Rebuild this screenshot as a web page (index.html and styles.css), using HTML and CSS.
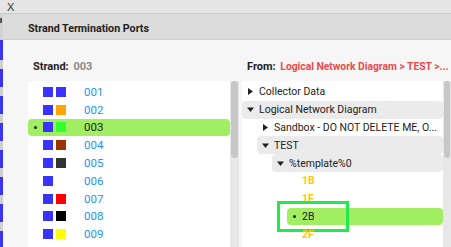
FILE: index.html
```html
<!DOCTYPE html>
<html lang="en">
<head>
  <meta charset="UTF-8">
  <title>Strand Termination Ports</title>
  <link rel="stylesheet" href="styles.css">
</head>
<body>
  <div class="topbar"><span class="close">X</span></div>
  <div class="main">
    <div class="behind">
      <div class="behind-head"><span class="glyph"></span></div>
      <div class="behind-body"></div>
    </div>
    <div class="modal">
      <div class="modal-head">Strand Termination Ports</div>
      <div class="modal-body">

        <!-- Strand list -->
        <div class="col col-strand">
          <div class="label"><b>Strand:</b> <span class="value">003</span></div>
          <div class="panel">
            <ul class="list">
              <li class="row"><span class="dot"></span><span class="sq blue"></span><span class="sq blue"></span><span class="num">001</span></li>
              <li class="row"><span class="dot"></span><span class="sq blue"></span><span class="sq orange"></span><span class="num">002</span></li>
              <li class="row selected"><span class="dot on"></span><span class="sq blue"></span><span class="sq green"></span><span class="num">003</span></li>
              <li class="row"><span class="dot"></span><span class="sq blue"></span><span class="sq brown"></span><span class="num">004</span></li>
              <li class="row"><span class="dot"></span><span class="sq blue"></span><span class="sq slate"></span><span class="num">005</span></li>
              <li class="row"><span class="dot"></span><span class="sq blue"></span><span class="sq none"></span><span class="num">006</span></li>
              <li class="row"><span class="dot"></span><span class="sq blue"></span><span class="sq red"></span><span class="num">007</span></li>
              <li class="row"><span class="dot"></span><span class="sq blue"></span><span class="sq black"></span><span class="num">008</span></li>
              <li class="row"><span class="dot"></span><span class="sq blue"></span><span class="sq yellow"></span><span class="num">009</span></li>
            </ul>
            <div class="scroll scroll-left"><div class="thumb"></div></div>
          </div>
        </div>

        <!-- From tree -->
        <div class="col col-from">
          <div class="label"><b>From:</b> <span class="path">Logical Network Diagram &gt; TEST &gt;...</span></div>
          <div class="panel">
            <ul class="tree">
              <li class="node lvl0">
                <svg class="tri" width="7" height="7" viewBox="0 0 7 7"><polygon points="1,0 6,3.5 1,7" fill="#222"/></svg>
                <span class="txt">Collector Data</span>
              </li>
              <li class="node lvl0 open">
                <svg class="tri" width="7" height="7" viewBox="0 0 7 7"><polygon points="0,1.5 7,1.5 3.5,6" fill="#222"/></svg>
                <span class="txt">Logical Network Diagram</span>
              </li>
              <li class="node lvl1">
                <svg class="tri" width="7" height="7" viewBox="0 0 7 7"><polygon points="1,0 6,3.5 1,7" fill="#222"/></svg>
                <span class="txt">Sandbox - DO NOT DELETE ME, O...</span>
              </li>
              <li class="node lvl1 open">
                <svg class="tri" width="7" height="7" viewBox="0 0 7 7"><polygon points="0,1.5 7,1.5 3.5,6" fill="#222"/></svg>
                <span class="txt">TEST</span>
              </li>
              <li class="node lvl2 open">
                <svg class="tri" width="7" height="7" viewBox="0 0 7 7"><polygon points="0,1.5 7,1.5 3.5,6" fill="#222"/></svg>
                <span class="txt">%template%0</span>
              </li>
              <li class="node lvl3 leaf"><span class="dot"></span><span class="port">1B</span></li>
              <li class="node lvl3 leaf"><span class="dot"></span><span class="port">1F</span></li>
              <li class="node lvl3 leaf selected"><span class="dot on"></span><span class="txt">2B</span><span class="focus"></span></li>
              <li class="node lvl3 leaf"><span class="dot"></span><span class="port">2F</span></li>
            </ul>
            <div class="scroll scroll-right"><div class="thumb"></div></div>
          </div>
        </div>

      </div>
    </div>
  </div>
</body>
</html>
```

FILE: styles.css
```css
* {
  margin: 0;
  padding: 0;
  box-sizing: border-box;
}

html, body {
  width: 451px;
  height: 247px;
  overflow: hidden;
}

body {
  display: flex;
  flex-direction: column;
  font-family: Roboto, 'Liberation Sans', Arial, sans-serif;
  font-size: 11px;
  color: #222;
  background: #d4d4d4;
}

/* barra de cima com o X */
.topbar {
  height: 14px;
  flex: none;
  background: #e5e5e5;
  border-bottom: 1px solid #cbcbcb;
  padding: 1px 0 0 7px;
  display: flex;
  align-items: center;
}

.close {
  font-family: 'Liberation Sans', Arial, sans-serif;
  font-size: 11px;
  line-height: 11px;
  color: #333;
}

.main {
  flex: 1;
  display: flex;
  min-height: 0;
}

/* pedaço da tela de trás */
.behind {
  width: 3px;
  flex: none;
  display: flex;
  flex-direction: column;
  overflow: hidden;
}

.behind-head {
  height: 26px;
  background: #d2d2d2;
  padding-top: 4px;
}

.glyph {
  display: block;
  width: 2px;
  height: 5px;
  background: #555;
}

.behind-body {
  flex: 1;
  background: repeating-linear-gradient(#3a33f0 0 18px, #cfcfcf 18px 27px);
  background-position: 0 2px;
}

.modal {
  flex: 1;
  display: flex;
  flex-direction: column;
  background: #f6f6f6;
  min-width: 0;
}

.modal-head {
  height: 26px;
  flex: none;
  background: #dcdcdc;
  border-bottom: 1px solid #d0d0d0;
  padding: 3px 0 0 25px;
  display: flex;
  align-items: center;
  font-weight: bold;
  font-size: 10.7px;
  color: #222;
}

.modal-body {
  flex: 1;
  display: flex;
  gap: 3px;
  padding-left: 25px;
  min-height: 0;
}

.col {
  display: flex;
  flex-direction: column;
  min-width: 0;
}

.col-strand {
  width: 211px;
  flex: none;
}

.col-from {
  flex: 1;
}

.label {
  height: 41px;
  flex: none;
  padding: 20px 0 0 5px;
  font-size: 11px;
  white-space: nowrap;
  overflow: hidden;
}

.label b {
  color: #222;
  margin-right: 2px;
}

.label .value {
  color: #8a8a8a;
  font-weight: bold;
}

.label .path {
  color: #ea4b4b;
  font-weight: bold;
  font-size: 10.3px;
}

.panel {
  flex: 1;
  display: flex;
  min-height: 0;
  min-width: 0;
}

.list, .tree {
  flex: 1;
  min-width: 0;
  list-style: none;
  background: #fff;
  padding-top: 2px;
  overflow: hidden;
}

.row, .node {
  height: 17.8px;
  display: flex;
  align-items: center;
  white-space: nowrap;
}

.row {
  padding-left: 6px;
  border-radius: 4px;
}

.row.selected, .node.selected {
  background: #a2ee62;
}

.dot {
  width: 3px;
  height: 3px;
  border-radius: 50%;
  margin-right: 6px;
  flex: none;
}

.dot.on {
  background: #222;
}

.sq {
  width: 10px;
  height: 10px;
  margin-right: 3px;
  flex: none;
}

.blue { background: #3a33ff; }
.orange { background: #ffa500; }
.green { background: #33ff33; }
.brown { background: #993300; }
.slate { background: #333333; }
.red { background: #ff0000; }
.black { background: #000000; }
.yellow { background: #ffff00; }
.none { background: transparent; }

.num {
  margin-left: 15px;
  font-size: 11.5px;
  color: #2196f3;
}

.row.selected .num {
  color: #222;
}

/* arvore do lado direito */
.node {
  border-radius: 4px;
  padding-left: 5px;
  font-size: 10.5px;
  color: #222;
}

.node.open {
  background: #ebebeb;
}

.node .tri {
  margin-right: 5px;
  flex: none;
}

.txt {
  overflow: hidden;
  text-overflow: ellipsis;
}

.lvl0 { margin-left: 0; }
.lvl1 { margin-left: 15px; }
.lvl2 { margin-left: 30px; }
.lvl3 { margin-left: 45px; padding-left: 6px; position: relative; }

.port {
  color: #ffc800;
  font-weight: bold;
}

/* moldura verde por cima do 2B */
.focus {
  position: absolute;
  left: -10px;
  top: -7px;
  width: 72px;
  height: 31px;
  border: 3px solid #22ea4c;
}

.scroll {
  flex: none;
  background: #e7e7e7;
  padding: 0 1px;
}

.scroll-left {
  width: 9px;
}

.scroll-right {
  width: 8px;
}

.thumb {
  height: 77px;
  background: #c7c7c7;
  border-radius: 4px;
}
```
